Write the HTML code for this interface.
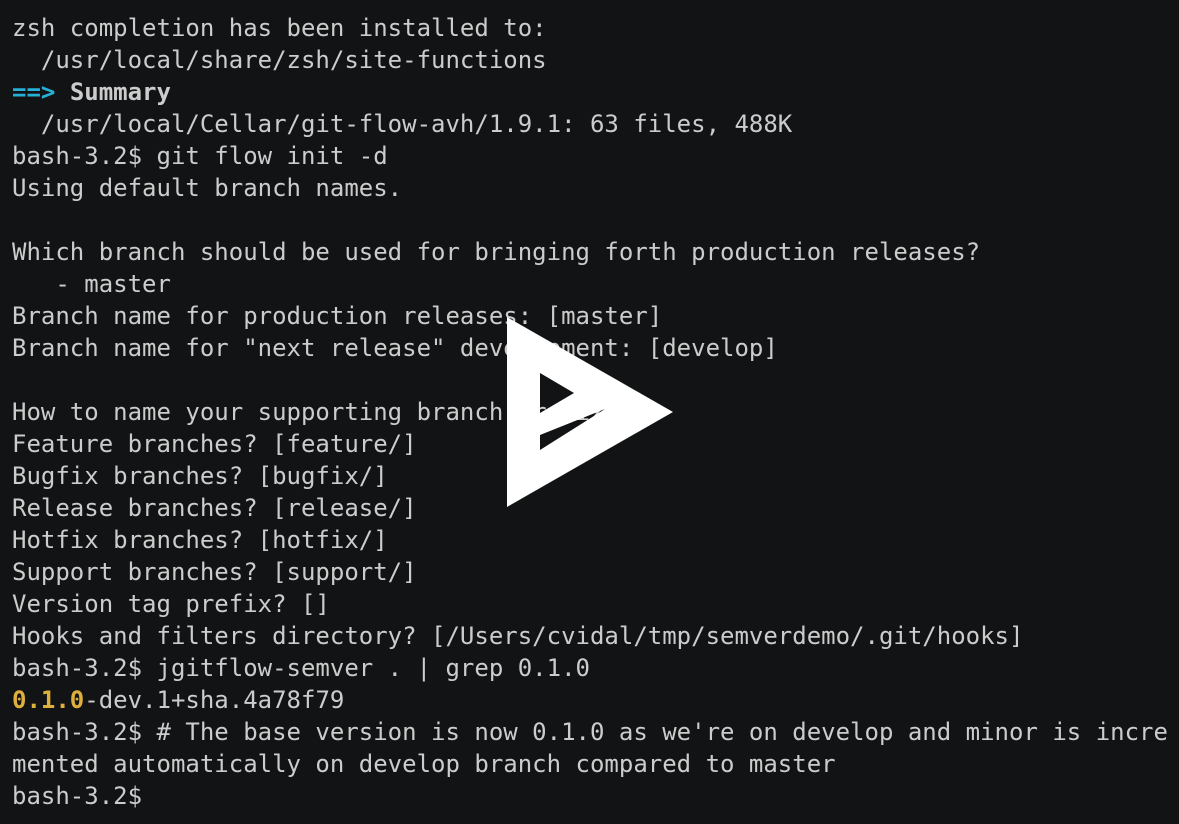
<!DOCTYPE html>
<html><head><meta charset="utf-8"><style>
html,body{margin:0;padding:0;background:#121314;}
body{width:1179px;height:824px;overflow:hidden;position:relative;}
pre{margin:0;padding:12px 0 0 12px;font-family:"DejaVu Sans Mono","Liberation Mono",monospace;font-size:24px;line-height:32px;color:#cccccc;white-space:pre;}
.b{color:#26b0d7;font-weight:bold}
.w{font-weight:bold}
.y{color:#ddaf3c;font-weight:bold}
svg{position:absolute;left:0;top:0}
</style></head><body>
<pre>zsh completion has been installed to:
  /usr/local/share/zsh/site-functions
<span class="b">==&gt;</span> <span class="w">Summary</span>
  /usr/local/Cellar/git-flow-avh/1.9.1: 63 files, 488K
bash-3.2$ git flow init -d
Using default branch names.

Which branch should be used for bringing forth production releases?
   - master
Branch name for production releases: [master]
Branch name for "next release" development: [develop]

How to name your supporting branch prefixes?
Feature branches? [feature/]
Bugfix branches? [bugfix/]
Release branches? [release/]
Hotfix branches? [hotfix/]
Support branches? [support/]
Version tag prefix? []
Hooks and filters directory? [/Users/cvidal/tmp/semverdemo/.git/hooks]
bash-3.2$ jgitflow-semver . | grep 0.1.0
<span class="y">0.1.0</span>-dev.1+sha.4a78f79
bash-3.2$ # The base version is now 0.1.0 as we're on develop and minor is incre
mented automatically on develop branch compared to master
bash-3.2$</pre>
<svg width="1179" height="824"><path fill="#fff" fill-rule="evenodd" d="M507 317 L673 412 L507 507 Z M540 373 L574 393 L540 413 Z M540 435 L605 409 L540 450 Z"/></svg>
</body></html>
